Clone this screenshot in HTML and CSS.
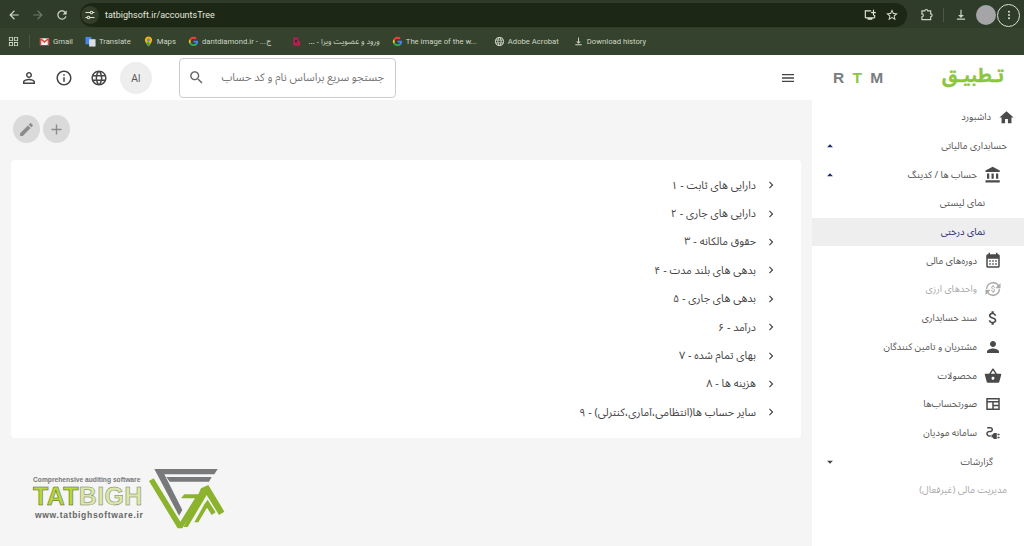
FILE: index.html
```html
<!DOCTYPE html>
<html lang="fa">
<head>
<meta charset="utf-8">
<title>tatbighsoft.ir/accountsTree</title>
<link rel="stylesheet" href="styles.css">
</head>
<body>
<svg class="defs" aria-hidden="true">
<symbol id="home" viewBox="0 0 24 24"><path d="M10 20v-6h4v6h5v-8h3L12 3 2 12h3v8z"/></symbol>
<symbol id="bank" viewBox="0 0 24 24"><path d="M4 10v7h3v-7H4zm6 0v7h3v-7h-3zM2 22h19v-3H2v3zm14-12v7h3v-7h-3zM11.500 1L2 6v2h19V6l-9.500-5z"/></symbol>
<symbol id="cal" viewBox="0 0 24 24"><path d="M19 3h-1V1h-2v2H8V1H6v2H5c-1.110 0-2 .9-2 2v14c0 1.100.9 2 2 2h14c1.100 0 2-.9 2-2V5c0-1.100-.9-2-2-2zm0 16H5V9h14v10zM7 11h2v2H7zm4 0h2v2h-2zm4 0h2v2h-2zm-8 4h2v2H7zm4 0h2v2h-2zm4 0h2v2h-2z"/></symbol>
<symbol id="money" viewBox="0 0 24 24"><path d="M11.800 10.900c-2.270-.59-3-1.200-3-2.150 0-1.090 1.010-1.850 2.700-1.850 1.780 0 2.440.85 2.500 2.100h2.210c-.07-1.720-1.120-3.300-3.210-3.810V3h-3v2.160c-1.940.42-3.500 1.680-3.500 3.610 0 2.310 1.910 3.460 4.700 4.130 2.500.6 3 1.480 3 2.410 0 .69-.49 1.790-2.700 1.790-2.060 0-2.870-.92-2.980-2.100h-2.200c.12 2.190 1.760 3.420 3.680 3.830V21h3v-2.150c1.950-.37 3.500-1.500 3.500-3.550 0-2.840-2.430-3.810-4.700-4.400z"/></symbol>
<symbol id="person" viewBox="0 0 24 24"><path d="M12 12c2.210 0 4-1.790 4-4s-1.790-4-4-4-4 1.790-4 4 1.790 4 4 4zm0 2c-2.670 0-8 1.340-8 4v2h16v-2c0-2.660-5.330-4-8-4z"/></symbol>
<symbol id="basket" viewBox="0 0 24 24"><path d="M17.210 9l-4.380-6.560c-.19-.28-.51-.42-.83-.42-.32 0-.64.14-.83.43L6.790 9H2c-.55 0-1 .45-1 1 0 .09.01.18.04.27l2.540 9.270c.23.84 1 1.460 1.920 1.460h13c.92 0 1.690-.62 1.930-1.460l2.540-9.270L23 10c0-.55-.45-1-1-1h-4.790zM9 9l3-4.400L15 9H9zm3 8c-1.100 0-2-.9-2-2s.9-2 2-2 2 .9 2 2-.9 2-2 2z"/></symbol>
<symbol id="invoice" viewBox="0 0 24 24"><path fill-rule="evenodd" d="M3 4h18v16H3zM5 6v2h14V6zM5 10v8h6v-8zM13 10v3h6v-3zM13 15v3h6v-3z"/></symbol>
<symbol id="plug" viewBox="0 0 24 24"><path d="M21 14c0-.55-.45-1-1-1h-2v2h2c.55 0 1-.45 1-1zM20 17h-2v2h2c.55 0 1-.45 1-1s-.45-1-1-1zM12 14h-2v4h2c0 1.100.9 2 2 2h3v-8h-3c-1.100 0-2 .9-2 2zM5 13c0-1.100.9-2 2-2h1.500c1.930 0 3.500-1.570 3.500-3.500S10.430 4 8.500 4H5c-.55 0-1 .45-1 1s.45 1 1 1h3.500c.83 0 1.500.67 1.500 1.500S9.330 9 8.500 9H7c-2.210 0-4 1.790-4 4s1.790 4 4 4h2v-2H7c-1.100 0-2-.9-2-2z"/></symbol>
<symbol id="sync" viewBox="0 0 24 24"><path d="M12 2.500a9.500 9.500 0 0 1 7.700 3.900L22 4v7h-7l3.200-3.200A7.700 7.700 0 0 0 4.300 12H2.500A9.500 9.500 0 0 1 12 2.500zm0 19a9.500 9.500 0 0 1-7.700-3.900L2 20v-7h7l-3.200 3.200A7.700 7.700 0 0 0 19.700 12h1.800a9.500 9.500 0 0 1-9.500 9.500z"/><path d="M12.300 11.300c-1.200-.3-1.600-.6-1.600-1.100s.5-1 1.400-1c.9 0 1.300.5 1.300 1.100h1.200c0-.9-.6-1.700-1.700-2V7h-1.600v1.200c-1 .2-1.800.9-1.800 1.900 0 1.200 1 1.800 2.500 2.200 1.300.3 1.600.8 1.600 1.300 0 .4-.3.9-1.400.9s-1.500-.5-1.600-1.100H9.400c.1 1.200.9 1.800 1.900 2V17h1.600v-1.100c1-.2 1.800-.8 1.800-1.900 0-1.500-1.300-2.400-2.400-2.700z"/></symbol>
<symbol id="caret-up" viewBox="0 0 24 24"><path d="M7 14l5-5 5 5z"/></symbol>
<symbol id="caret-down" viewBox="0 0 24 24"><path d="M7 10l5 5 5-5z"/></symbol>
<symbol id="chevron" viewBox="0 0 24 24"><path d="M10 6L8.590 7.410 13.170 12l-4.580 4.590L10 18l6-6z"/></symbol>
<symbol id="user-o" viewBox="0 0 24 24"><path d="M12 5.900c1.160 0 2.100.94 2.100 2.100s-.94 2.100-2.100 2.100S9.900 9.160 9.900 8s.94-2.100 2.100-2.100m0 9c2.970 0 6.100 1.460 6.100 2.100v1.100H5.900V17c0-.64 3.130-2.100 6.100-2.100M12 4C9.790 4 8 5.790 8 8s1.790 4 4 4 4-1.790 4-4-1.790-4-4-4zm0 9c-2.670 0-8 1.340-8 4v3h16v-3c0-2.660-5.330-4-8-4z"/></symbol>
<symbol id="info" viewBox="0 0 24 24"><path d="M11 7h2v2h-2zm0 4h2v6h-2zm1-9C6.480 2 2 6.480 2 12s4.480 10 10 10 10-4.480 10-10S17.520 2 12 2zm0 18c-4.410 0-8-3.590-8-8s3.590-8 8-8 8 3.590 8 8-3.590 8-8 8z"/></symbol>
<symbol id="globe" viewBox="0 0 24 24"><path d="M11.990 2C6.470 2 2 6.480 2 12s4.470 10 9.990 10C17.520 22 22 17.520 22 12S17.520 2 11.990 2zm6.930 6h-2.950c-.32-1.250-.78-2.450-1.380-3.560 1.840.63 3.370 1.910 4.330 3.560zM12 4.040c.83 1.200 1.480 2.530 1.910 3.960h-3.820c.43-1.430 1.080-2.760 1.910-3.960zM4.260 14C4.100 13.360 4 12.690 4 12s.1-1.360.26-2h3.380c-.08.66-.14 1.320-.14 2 0 .68.06 1.340.14 2H4.260zm.82 2h2.950c.32 1.250.78 2.450 1.380 3.560-1.840-.63-3.370-1.900-4.330-3.560zm2.950-8H5.080c.96-1.660 2.490-2.930 4.330-3.560C8.810 5.550 8.350 6.750 8.030 8zM12 19.960c-.83-1.200-1.480-2.530-1.910-3.960h3.820c-.43 1.430-1.080 2.760-1.910 3.960zM14.340 14H9.660c-.09-.66-.16-1.320-.16-2 0-.68.07-1.350.16-2h4.680c.09.65.16 1.320.16 2 0 .68-.07 1.340-.16 2zm.25 5.560c.6-1.110 1.060-2.310 1.380-3.560h2.950c-.96 1.650-2.490 2.930-4.330 3.560zM16.360 14c.08-.66.14-1.320.14-2 0-.68-.06-1.340-.14-2h3.380c.16.64.26 1.310.26 2s-.1 1.360-.26 2h-3.380z"/></symbol>
<symbol id="search" viewBox="0 0 24 24"><path d="M15.500 14h-.79l-.28-.27C15.410 12.590 16 11.110 16 9.500 16 5.910 13.090 3 9.500 3S3 5.910 3 9.500 5.910 16 9.500 16c1.610 0 3.090-.59 4.230-1.570l.27.28v.79l5 4.990L20.490 19l-4.990-5zm-6 0C7.010 14 5 11.990 5 9.500S7.010 5 9.500 5 14 7.010 14 9.500 11.990 14 9.500 14z"/></symbol>
<symbol id="menu" viewBox="0 0 24 24"><path d="M3 18h18v-2H3v2zm0-5h18v-2H3v2zm0-7v2h18V6H3z"/></symbol>
<symbol id="edit" viewBox="0 0 24 24"><path d="M3 17.250V21h3.750L17.810 9.940l-3.750-3.750L3 17.250zM20.710 7.040c.39-.39.39-1.020 0-1.410l-2.340-2.340c-.39-.39-1.020-.39-1.410 0l-1.830 1.830 3.750 3.750 1.830-1.830z"/></symbol>
<symbol id="add" viewBox="0 0 24 24"><path d="M19 13h-6v6h-2v-6H5v-2h6V5h2v6h6v2z"/></symbol>
<symbol id="back" viewBox="0 0 24 24"><path d="M20 11H7.830l5.590-5.590L12 4l-8 8 8 8 1.410-1.410L7.830 13H20v-2z"/></symbol>
<symbol id="forward" viewBox="0 0 24 24"><path d="M4 11h12.170l-5.590-5.590L12 4l8 8-8 8-1.410-1.410L16.170 13H4v-2z"/></symbol>
<symbol id="reload" viewBox="0 0 24 24"><path d="M17.650 6.350C16.200 4.900 14.210 4 12 4c-4.420 0-7.990 3.580-7.990 8s3.570 8 7.990 8c3.730 0 6.840-2.550 7.730-6h-2.080c-.82 2.330-3.040 4-5.650 4-3.310 0-6-2.690-6-6s2.690-6 6-6c1.660 0 3.140.69 4.220 1.780L13 11h7V4l-2.350 2.350z"/></symbol>
<symbol id="tune" viewBox="0 0 24 24"><path d="M3 6h9v2H3zm14 0h4v2h-4zm-2-2.500a3.500 3.500 0 1 1 0 7 3.500 3.500 0 0 1 0-7zm0 2a1.500 1.500 0 1 0 0 3 1.500 1.500 0 0 0 0-3zM3 16h4v2H3zm9 0h9v2h-9zM9 13.500a3.500 3.500 0 1 1 0 7 3.500 3.500 0 0 1 0-7zm0 2a1.500 1.500 0 1 0 0 3 1.500 1.500 0 0 0 0-3z"/></symbol>
<symbol id="install" viewBox="0 0 24 24"><path d="M3 4h11v2H5v10h14v-4h2v4c0 1.100-.9 2-2 2h-3v2H8v-2H5c-1.100 0-2-.9-2-2V4zm14-1h2v4h3v2h-3v4h-2V9h-3V7h3z"/></symbol>
<symbol id="star" viewBox="0 0 24 24"><path d="M22 9.240l-7.190-.62L12 2 9.190 8.630 2 9.240l5.460 4.730L5.820 21 12 17.270 18.180 21l-1.630-7.030L22 9.240zM12 15.400l-3.760 2.270 1-4.280-3.320-2.880 4.380-.38L12 6.100l1.710 4.040 4.380.38-3.320 2.880 1 4.280L12 15.400z"/></symbol>
<symbol id="ext" viewBox="0 0 24 24"><path d="M5 5h5a2.500 2.500 0 0 1 5 0h5v5a2.500 2.500 0 0 1 0 5v5H5v-5a2.500 2.500 0 0 0 0-5z" fill="none" stroke="currentColor" stroke-width="2"/></symbol>
<symbol id="dl" viewBox="0 0 24 24"><path d="M5 20h14v-2H5v2zM13 3h-2v9H7l5 5 5-5h-4z"/></symbol>
<symbol id="dots" viewBox="0 0 24 24"><circle cx="12" cy="5.500" r="2"/><circle cx="12" cy="12" r="2"/><circle cx="12" cy="18.500" r="2"/></symbol>
<symbol id="grid" viewBox="0 0 24 24"><path d="M2 2h9v9H2zm2 2v5h5V4zm9-2h9v9h-9zm2 2v5h5V4zM2 13h9v9H2zm2 2v5h5v-5zm9-2h9v9h-9zm2 2v5h5v-5z"/></symbol>
<symbol id="g" viewBox="0 0 24 24"><path fill="#4285f4" d="M22 12.200c0-.7-.1-1.400-.2-2H12v3.900h5.600a4.800 4.800 0 0 1-2.100 3.100v2.600h3.400c2-1.800 3.100-4.500 3.100-7.600z"/><path fill="#34a853" d="M12 22c2.800 0 5.200-.9 6.900-2.500l-3.400-2.600c-.9.600-2.100 1-3.500 1-2.700 0-5-1.800-5.800-4.300H2.700v2.700A10 10 0 0 0 12 22z"/><path fill="#fbbc05" d="M6.200 13.600a6 6 0 0 1 0-3.200V7.700H2.700a10 10 0 0 0 0 8.600z"/><path fill="#ea4335" d="M12 5.900c1.500 0 2.900.5 4 1.600l3-3A10 10 0 0 0 2.700 7.700l3.500 2.700C7 7.700 9.300 5.900 12 5.900z"/></symbol>
</svg>

<header class="chrome">
  <div class="toolbar">
    <svg class="cic"><use href="#back"/></svg>
    <svg class="cic dim"><use href="#forward"/></svg>
    <svg class="cic"><use href="#reload"/></svg>
    <div class="omnibox">
      <span class="tune"><svg class="cic-s"><use href="#tune"/></svg></span>
      <span class="url">tatbighsoft.ir/accountsTree</span>
      <svg class="cic-m"><use href="#install"/></svg>
      <svg class="cic-m"><use href="#star"/></svg>
    </div>
    <svg class="cic ext-ic"><use href="#ext"/></svg>
    <span class="vsep"></span>
    <svg class="cic dl-ic"><use href="#dl"/></svg>
    <span class="avatar"></span>
    <span class="more"><svg class="cic-s"><use href="#dots"/></svg></span>
  </div>
  <div class="bookmarks">
    <svg class="bm-grid"><use href="#grid"/></svg>
    <span class="bm-sep"></span>
    <span class="bm"><svg class="bm-ic" viewBox="0 0 24 24"><path fill="#f2f2f2" d="M2 5h20v15H2z"/><path fill="#e0463a" d="M2 5h3l7 6 7-6h3v15h-3V9l-7 6-7-6v11H2z"/></svg>Gmail</span>
    <span class="bm"><svg class="bm-ic" viewBox="0 0 24 24"><path fill="#4a88e8" d="M1 2h13v16H1z"/><path fill="#d7dfe9" d="M9 7h14v16H9z"/></svg>Translate</span>
    <span class="bm"><svg class="bm-ic" viewBox="0 0 24 24"><path fill="#f5b400" d="M12 1c-4.400 0-8 3.400-8 7.800C4 14 12 23 12 23s8-9 8-14.200C20 4.400 16.400 1 12 1z"/><path fill="#3aa757" d="M7 16l5-5 3 7-3 5z"/><circle cx="12" cy="8.500" r="3" fill="#4285f4"/></svg>Maps</span>
    <span class="bm"><svg class="bm-ic g"><use href="#g"/></svg>dantdiamond.ir - ...ج</span>
    <span class="bm fa"><svg class="bm-ic" viewBox="0 0 24 24"><path fill="#b51f4f" d="M5 3h11v8h4v10H5z"/><path fill="#2b2b2b" d="M9 8h4v6H9z"/></svg><span class="fa-txt" dir="rtl">ورود و عضویت ویرا - ...</span></span>
    <span class="bm"><svg class="bm-ic g"><use href="#g"/></svg>The image of the w...</span>
    <span class="bm bm-far"><svg class="bm-ic g"><use href="#globe"/></svg>Adobe Acrobat</span>
    <span class="bm bm-last"><svg class="bm-ic"><use href="#dl"/></svg>Download history</span>
  </div>
</header>

<div class="topbar">
  <div class="tools">
    <svg class="tool"><use href="#user-o"/></svg>
    <svg class="tool"><use href="#info"/></svg>
    <svg class="tool"><use href="#globe"/></svg>
    <span class="ai">AI</span>
  </div>
  <div class="searchbox">
    <svg class="search-ic"><use href="#search"/></svg>
    <span class="placeholder" dir="rtl">جستجو سریع براساس نام و کد حساب</span>
  </div>
  <svg class="burger"><use href="#menu"/></svg>
  <div class="brand">
    <span class="rtm">R <b>T</b> M</span>
    <span class="brand-fa" dir="rtl">تـطبیـق</span>
  </div>
</div>

<div class="content">
  <main class="main">
    <div class="fabs">
      <span class="fab"><svg class="fab-ic"><use href="#edit"/></svg></span>
      <span class="fab"><svg class="fab-ic"><use href="#add"/></svg></span>
    </div>
    <ul class="tree" dir="rtl">
      <li><svg class="chev"><use href="#chevron"/></svg>دارایی های ثابت - ۱</li>
      <li><svg class="chev"><use href="#chevron"/></svg>دارایی های جاری - ۲</li>
      <li><svg class="chev"><use href="#chevron"/></svg>حقوق مالکانه - ۳</li>
      <li><svg class="chev"><use href="#chevron"/></svg>بدهی های بلند مدت - ۴</li>
      <li><svg class="chev"><use href="#chevron"/></svg>بدهی های جاری - ۵</li>
      <li><svg class="chev"><use href="#chevron"/></svg>درآمد - ۶</li>
      <li><svg class="chev"><use href="#chevron"/></svg>بهای تمام شده - ۷</li>
      <li><svg class="chev"><use href="#chevron"/></svg>هزینه ها - ۸</li>
      <li><svg class="chev"><use href="#chevron"/></svg>سایر حساب ها(انتظامی،آماری،کنترلی) - ۹</li>
    </ul>
    <div class="footer-logo">
      <div class="logo-text">
        <span class="logo-tag">Comprehensive auditing software</span>
        <span class="logo-name">TAT<span class="logo-light">BIGH</span></span>
        <span class="logo-web">www.tatbighsoftware.ir</span>
      </div>
      <svg class="logo-mark" viewBox="0 0 240 204">
        <path fill="#77797b" d="M28 12H218L208 28H58L112 135L102 152ZM64 36H200L192 50H74Z"/>
        <path fill="#8bb32d" d="M12 48L26 40L106 170L150 100H108L118 88H172L112 190H98Z"/>
        <path fill="#8bb32d" d="M168 70L190 60L238 140L222 150L185 90L128 186H116ZM178 118L188 104L212 142L200 150L186 128L160 172H148Z"/>
      </svg>
    </div>
  </main>
  <nav class="side" dir="rtl">
    <a class="row r-home"><svg class="nic n-home"><use href="#home"/></svg>داشبورد</a>
    <a class="row r-plain">حسابداری مالیاتی<svg class="caret"><use href="#caret-up"/></svg></a>
    <a class="row r-icon"><svg class="nic"><use href="#bank"/></svg>حساب ها / کدینگ<svg class="caret"><use href="#caret-up"/></svg></a>
    <a class="row r-sub">نمای لیستی</a>
    <a class="row r-sub active">نمای درختی</a>
    <a class="row r-icon"><svg class="nic"><use href="#cal"/></svg>دوره‌های مالی</a>
    <a class="row r-icon muted"><svg class="nic"><use href="#sync"/></svg>واحدهای ارزی</a>
    <a class="row r-icon"><svg class="nic"><use href="#money"/></svg>سند حسابداری</a>
    <a class="row r-icon"><svg class="nic"><use href="#person"/></svg>مشتریان و تامین کنندگان</a>
    <a class="row r-icon"><svg class="nic"><use href="#basket"/></svg>محصولات</a>
    <a class="row r-icon"><svg class="nic"><use href="#invoice"/></svg>صورتحساب‌ها</a>
    <a class="row r-icon"><svg class="nic"><use href="#plug"/></svg>سامانه مودیان</a>
    <a class="row r-report">گزارشات<svg class="caret dark"><use href="#caret-down"/></svg></a>
    <a class="row r-plain muted">مدیریت مالی (غیرفعال)</a>
  </nav>
</div>
</body>
</html>
```

FILE: styles.css
```css
* { box-sizing: border-box; }
html, body { margin: 0; padding: 0; }
body {
  width: 1024px;
  height: 546px;
  overflow: hidden;
  display: flex;
  flex-direction: column;
  background: #f5f5f5;
  font-family: "Noto Sans Arabic", "Open Sans", "DejaVu Sans", sans-serif;
  color: #444;
}
.defs { display: none; }

/* browser chrome */
.chrome { height: 55px; background: #35422d; flex: none; color: #d4dccb; }
.toolbar { height: 28px; display: flex; align-items: center; padding: 2px 0 0 7px; background: #2f3c29; }
.cic { width: 14px; height: 14px; fill: #cfd6c6; color: #cfd6c6; margin-right: 10px; flex: none; }
.dim { fill: #6f7a66; }
.cic-s { width: 12px; height: 12px; fill: #dde3d5; display: block; }
.cic-m { width: 14px; height: 14px; fill: #dde3d5; margin-left: 8px; flex: none; }
.omnibox {
  width: 827px; height: 24px; margin-left: 1px; margin-right: 12px;
  background: #1d2716; border-radius: 12px; display: flex; align-items: center; padding: 0 8px 0 1px;
}
.tune { width: 18px; height: 18px; border-radius: 50%; background: #323e2a; display: flex; align-items: center; justify-content: center; }
.url { flex: 1; margin-left: 6px; font: 9px Roboto, sans-serif; color: #e4e8de; }
.ext-ic { margin-right: 10px; }
.vsep { width: 1px; height: 14px; background: #4c5844; margin-right: 10px; }
.dl-ic { margin-right: 8px; }
.avatar { width: 20px; height: 20px; border-radius: 50%; background: #a5a5a7; margin-right: 1px; }
.more { width: 23px; height: 23px; border: 1px solid #d8e3cc; border-radius: 50%; display: flex; align-items: center; justify-content: center; }

.bookmarks { height: 27px; display: flex; align-items: center; padding-left: 8px; gap: 12px; font: 7.700px Roboto, sans-serif; color: #cfd6c6; }
.bm-grid { width: 11px; height: 11px; fill: #cfd6c6; }
.bm-sep { width: 1px; height: 13px; background: #4c5844; margin-right: -3px; margin-left: -2px; }
.bm { display: flex; align-items: center; gap: 3px; white-space: nowrap; }
.bm-ic { width: 11px; height: 11px; fill: #cfd6c6; flex: none; }
.fa-txt { font-family: "Noto Sans Arabic", "DejaVu Sans", sans-serif; min-width: 75px; }
.bm.fa { margin-left: 8px; }
.bm-far { margin-left: 5px; }
.bm-last { margin-left: 2px; }

/* app header */
.topbar { height: 45px; background: #fff; flex: none; display: flex; align-items: center; padding-left: 20px; }
.tools { display: flex; align-items: center; gap: 17px; }
.tool { width: 18px; height: 18px; fill: #444; }
.ai { width: 32px; height: 32px; border-radius: 50%; background: #eee; display: flex; align-items: center; justify-content: center; font: 10.500px "Open Sans", sans-serif; color: #555; margin-left: -5px; }
.searchbox { width: 217px; height: 40px; margin-left: 27px; border: 1px solid #ccc; border-radius: 4px; display: flex; align-items: center; padding: 0 11px 0 8px; }
.search-ic { width: 17px; height: 17px; fill: #666; }
.placeholder { flex: 1; font-size: 11px; color: #777; text-align: right; white-space: nowrap; }
.burger { width: 16px; height: 16px; fill: #444; margin-left: auto; margin-right: 16px; }
.brand { width: 212px; height: 100%; display: flex; align-items: center; justify-content: space-between; padding: 0 20px 0 21px; }
.rtm { font: bold 15.500px "Liberation Sans", sans-serif; color: #7a7c7e; word-spacing: 4px; }
.rtm b { color: #8cc63f; }
.brand-fa { font-size: 18.500px; font-weight: 700; color: #8cc63f; line-height: 1; -webkit-text-stroke: .4px #8cc63f; }

/* content */
.content { flex: 1; display: flex; min-height: 0; }
.main { flex: 1; padding: 15px 11px 0; display: flex; flex-direction: column; min-width: 0; }
.fabs { display: flex; gap: 3px; padding-left: 2px; height: 28px; }
.fab { width: 27px; height: 28px; border-radius: 50%; background: #dadada; display: flex; align-items: center; justify-content: center; }
.fab-ic { width: 17px; height: 17px; fill: #8b8b8b; }
.tree { list-style: none; margin: 17px 0 0; padding: 11px 23px 11px 0; background: #fff; border-radius: 4px; height: 278px; font-size: 10.800px; color: #444; }
.tree li { height: 28.400px; display: flex; align-items: center; gap: 8px; white-space: nowrap; }
.chev { width: 14px; height: 14px; fill: #444; }
.footer-logo { display: flex; align-items: flex-start; margin: 27px 0 0 22px; height: 68px; }
.logo-text { display: flex; flex-direction: column; width: 112px; padding-top: 11px; font-family: "Liberation Sans", sans-serif; }
.logo-tag { font-size: 6.700px; line-height: 8px; font-weight: 700; color: #777; white-space: nowrap; }
.logo-name { font-size: 25px; font-weight: 700; line-height: 24px; letter-spacing: .3px; color: #b5d63c; -webkit-text-stroke: .5px #4a5a20; white-space: nowrap; }
.logo-light { color: #dbe9a6; -webkit-text-stroke: .5px #767c6c; }
.logo-web { font-size: 8.500px; line-height: 10px; font-weight: 700; color: #666; margin-top: 2px; padding-left: 2px; letter-spacing: .7px; white-space: nowrap; }
.logo-mark { width: 80px; height: 68px; flex: none; }

/* sidebar */
.side { width: 212px; flex: none; background: #fff; padding-top: 3px; font-size: 9.500px; color: #555; }
.row { height: 28.700px; display: flex; align-items: center; white-space: nowrap; }
.r-home { padding-right: 9px; }
.r-plain { padding-right: 17px; }
.r-icon { padding-right: 22px; }
.r-sub { padding-right: 39px; }
.r-report { padding-right: 31px; }
.nic { width: 18px; height: 18px; fill: #4a4a4a; margin-left: 7px; flex: none; }
.n-home { width: 17px; height: 17px; }
.active { background: #eee; color: #2a2a72; }
.muted { color: #aaa; }
.muted .nic { fill: #aaa; }
.caret { width: 14px; height: 14px; fill: #1d2a6d; margin-right: auto; margin-left: 11px; flex: none; }
.caret.dark { fill: #444; }
```
